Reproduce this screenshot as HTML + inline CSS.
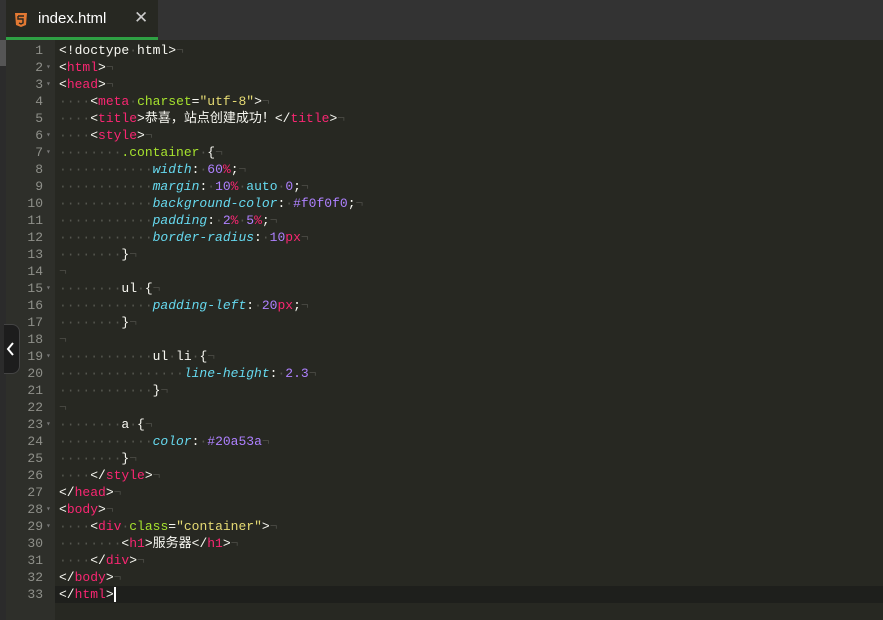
<!DOCTYPE html>
<html><head><meta charset="utf-8"><style>
body{margin:0;width:883px;height:620px;overflow:hidden;background:#272822;font-family:"Liberation Mono","Noto Sans CJK SC",monospace;}
#tabs{position:absolute;left:0;top:0;width:883px;height:40px;background:#333333;}
#tab{position:absolute;left:6px;top:0;width:152px;height:37px;background:#272822;border-bottom:3px solid #2ea043;}
#tab .name{position:absolute;left:32px;top:10px;font:15px "Liberation Sans",sans-serif;color:#fff;}
#tab .x{position:absolute;left:128px;top:8px;font:17px "Liberation Sans",sans-serif;color:#ccc;}
#strip{position:absolute;left:0;top:40px;width:6px;height:580px;background:#2b2b2b;}
#sb{position:absolute;left:0;top:40px;width:6px;height:26px;background:#555;}
#gut{position:absolute;left:6px;top:40px;width:49px;height:580px;background:#2e2f2a;}
#code{position:absolute;left:0;top:42px;width:883px;font-size:13px;line-height:17px;color:#f8f8f2;}
.l{height:17px;position:relative}
.n{position:absolute;left:6px;width:37px;text-align:right;color:#8f908a}
.f{position:absolute;left:46px;color:#777;font-size:8px}
.c{position:absolute;left:59px;white-space:pre}
.cur{background:#1e1f1c}
.t{color:#f92672}.a{color:#a6e22e}.s{color:#e6db74}.p{color:#66d9ef;font-style:italic}.m{color:#ae81ff}.d{color:#55564f}.e{color:#4a4b45}.g{color:#a6e22e}
#pull{position:absolute;left:4px;top:324px;width:15px;height:48px;background:#1d1d1d;border-radius:0 8px 8px 0;border:1px solid #444;border-left:none}
</style></head><body>
<div id="tabs"><div id="tab">
<svg style="position:absolute;left:9px;top:13px" width="12" height="14" viewBox="0 0 12 14"><path d="M0 0h12l-1 12-5 2-5-2z" fill="#e37933"/><path d="M3 3h6M3 3v3h5v4l-2 1-2-1" stroke="#272822" stroke-width="1.4" fill="none"/></svg>
<span class="name">index.html</span><span class="x">✕</span></div></div>
<div id="strip"></div><div id="sb"></div><div id="gut"></div>
<div id="pull"><svg width="14" height="48"><path d="M9 18l-5 6 5 6" stroke="#fff" stroke-width="2" fill="none"/></svg></div>
<div id="code">
<div class="l"><span class="n">1</span><span class="c">&lt;!doctype<span class="d">·</span>html&gt;<span class="e">¬</span></span></div>
<div class="l"><span class="n">2</span><span class="f">▾</span><span class="c">&lt;<span class="t">html</span>&gt;<span class="e">¬</span></span></div>
<div class="l"><span class="n">3</span><span class="f">▾</span><span class="c">&lt;<span class="t">head</span>&gt;<span class="e">¬</span></span></div>
<div class="l"><span class="n">4</span><span class="c"><span class="d">····</span>&lt;<span class="t">meta</span><span class="d">·</span><span class="a">charset</span>=<span class="s">"utf-8"</span>&gt;<span class="e">¬</span></span></div>
<div class="l"><span class="n">5</span><span class="c"><span class="d">····</span>&lt;<span class="t">title</span>&gt;恭喜，站点创建成功！&lt;/<span class="t">title</span>&gt;<span class="e">¬</span></span></div>
<div class="l"><span class="n">6</span><span class="f">▾</span><span class="c"><span class="d">····</span>&lt;<span class="t">style</span>&gt;<span class="e">¬</span></span></div>
<div class="l"><span class="n">7</span><span class="f">▾</span><span class="c"><span class="d">········</span><span class="g">.container</span><span class="d">·</span>{<span class="e">¬</span></span></div>
<div class="l"><span class="n">8</span><span class="c"><span class="d">············</span><span class="p">width</span>:<span class="d">·</span><span class="m">60</span><span class="t">%</span>;<span class="e">¬</span></span></div>
<div class="l"><span class="n">9</span><span class="c"><span class="d">············</span><span class="p">margin</span>:<span class="d">·</span><span class="m">10</span><span class="t">%</span><span class="d">·</span><span class="p" style="font-style:normal">auto</span><span class="d">·</span><span class="m">0</span>;<span class="e">¬</span></span></div>
<div class="l"><span class="n">10</span><span class="c"><span class="d">············</span><span class="p">background-color</span>:<span class="d">·</span><span class="m">#f0f0f0</span>;<span class="e">¬</span></span></div>
<div class="l"><span class="n">11</span><span class="c"><span class="d">············</span><span class="p">padding</span>:<span class="d">·</span><span class="m">2</span><span class="t">%</span><span class="d">·</span><span class="m">5</span><span class="t">%</span>;<span class="e">¬</span></span></div>
<div class="l"><span class="n">12</span><span class="c"><span class="d">············</span><span class="p">border-radius</span>:<span class="d">·</span><span class="m">10</span><span class="t">px</span><span class="e">¬</span></span></div>
<div class="l"><span class="n">13</span><span class="c"><span class="d">········</span>}<span class="e">¬</span></span></div>
<div class="l"><span class="n">14</span><span class="c"><span class="e">¬</span></span></div>
<div class="l"><span class="n">15</span><span class="f">▾</span><span class="c"><span class="d">········</span>ul<span class="d">·</span>{<span class="e">¬</span></span></div>
<div class="l"><span class="n">16</span><span class="c"><span class="d">············</span><span class="p">padding-left</span>:<span class="d">·</span><span class="m">20</span><span class="t">px</span>;<span class="e">¬</span></span></div>
<div class="l"><span class="n">17</span><span class="c"><span class="d">········</span>}<span class="e">¬</span></span></div>
<div class="l"><span class="n">18</span><span class="c"><span class="e">¬</span></span></div>
<div class="l"><span class="n">19</span><span class="f">▾</span><span class="c"><span class="d">············</span>ul<span class="d">·</span>li<span class="d">·</span>{<span class="e">¬</span></span></div>
<div class="l"><span class="n">20</span><span class="c"><span class="d">················</span><span class="p">line-height</span>:<span class="d">·</span><span class="m">2.3</span><span class="e">¬</span></span></div>
<div class="l"><span class="n">21</span><span class="c"><span class="d">············</span>}<span class="e">¬</span></span></div>
<div class="l"><span class="n">22</span><span class="c"><span class="e">¬</span></span></div>
<div class="l"><span class="n">23</span><span class="f">▾</span><span class="c"><span class="d">········</span>a<span class="d">·</span>{<span class="e">¬</span></span></div>
<div class="l"><span class="n">24</span><span class="c"><span class="d">············</span><span class="p">color</span>:<span class="d">·</span><span class="m">#20a53a</span><span class="e">¬</span></span></div>
<div class="l"><span class="n">25</span><span class="c"><span class="d">········</span>}<span class="e">¬</span></span></div>
<div class="l"><span class="n">26</span><span class="c"><span class="d">····</span>&lt;/<span class="t">style</span>&gt;<span class="e">¬</span></span></div>
<div class="l"><span class="n">27</span><span class="c">&lt;/<span class="t">head</span>&gt;<span class="e">¬</span></span></div>
<div class="l"><span class="n">28</span><span class="f">▾</span><span class="c">&lt;<span class="t">body</span>&gt;<span class="e">¬</span></span></div>
<div class="l"><span class="n">29</span><span class="f">▾</span><span class="c"><span class="d">····</span>&lt;<span class="t">div</span><span class="d">·</span><span class="a">class</span>=<span class="s">"container"</span>&gt;<span class="e">¬</span></span></div>
<div class="l"><span class="n">30</span><span class="c"><span class="d">········</span>&lt;<span class="t">h1</span>&gt;服务器&lt;/<span class="t">h1</span>&gt;<span class="e">¬</span></span></div>
<div class="l"><span class="n">31</span><span class="c"><span class="d">····</span>&lt;/<span class="t">div</span>&gt;<span class="e">¬</span></span></div>
<div class="l"><span class="n">32</span><span class="c">&lt;/<span class="t">body</span>&gt;<span class="e">¬</span></span></div>
<div class="l cur" style="margin-left:55px"><span class="n" style="left:-49px">33</span><span class="c" style="left:4px">&lt;/<span class="t">html</span>&gt;<span style="border-left:2px solid #fff"> </span></span></div>
</div>
</body></html>
